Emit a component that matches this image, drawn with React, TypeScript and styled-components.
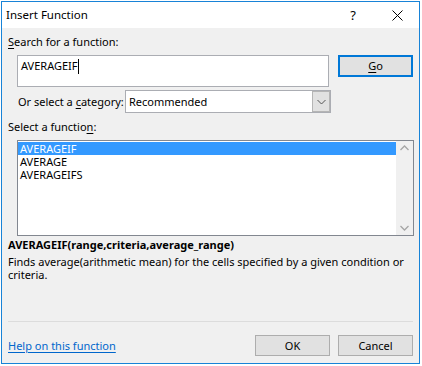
import React from "react";
import styled, { createGlobalStyle } from "styled-components";

const Global = createGlobalStyle`
  html, body { margin: 0; padding: 0; background: #ffffff; }
  body { font-family: "Noto Sans", "Segoe UI", sans-serif; font-size: 11px; color: #000; }
  * { box-sizing: border-box; }
`;

const Dialog = styled.div`
  margin: 1px 0 0 1px;
  width: 419px;
  height: 363px;
  border: 1px solid #1883d7;
  background: #f0f0f0;
  display: flex;
  flex-direction: column;
`;

const TitleBar = styled.div`
  height: 26px;
  background: #ffffff;
  display: flex;
  align-items: center;
  padding-left: 4px;
`;

const Title = styled.div`
  flex: 1;
  font-size: 11.5px;
  line-height: 16px;
`;

const TitleButton = styled.div`
  width: 44px;
  height: 26px;
  display: flex;
  align-items: center;
  justify-content: center;
  font-size: 13px;
`;

const Body = styled.div`
  flex: 1;
  display: flex;
  flex-direction: column;
  padding: 6px 6px 7px 6px;
  white-space: nowrap;
`;

const Label = styled.div<{ $mt?: number }>`
  line-height: 16px;
  margin-top: ${(p) => p.$mt ?? 0}px;
`;

const Key = styled.span`
  text-decoration: underline;
  text-underline-offset: 2px;
`;

const SearchRow = styled.div`
  display: flex;
  margin-top: 5px;
  margin-left: 9px;
  gap: 9px;
`;

const SearchBox = styled.div`
  width: 313px;
  height: 32px;
  background: #fff;
  border: 1px solid #abadb3;
  padding: 2px 0 0 3px;
  line-height: 16px;
  display: flex;
  align-items: flex-start;
`;

const Caret = styled.span`
  display: inline-block;
  width: 1px;
  height: 15px;
  background: #000;
  margin-top: 1px;
`;

const Button = styled.div<{ $primary?: boolean }>`
  width: 75px;
  height: ${(p) => (p.$primary ? 22 : 21)}px;
  background: #e1e1e1;
  border: ${(p) => (p.$primary ? "2px solid #0078d7" : "1px solid #adadad")};
  display: flex;
  align-items: center;
  justify-content: center;
  line-height: 16px;
`;

const CategoryRow = styled.div`
  display: flex;
  align-items: center;
  margin-top: 3px;
  margin-left: 10px;
  height: 23px;
`;

const Select = styled.div`
  margin-left: auto;
  margin-right: 82px;
  width: 206px;
  height: 23px;
  background: #fff;
  border: 1px solid #abadb3;
  display: flex;
  align-items: center;
  padding-left: 3px;
`;

const SelectText = styled.div`
  flex: 1;
`;

const SelectArrow = styled.div`
  width: 18px;
  height: 21px;
  background: #e1e1e1;
  border: 1px solid #b5b5b5;
  display: flex;
  align-items: center;
  justify-content: center;
`;

const ListBox = styled.div`
  margin: 5px 0 0 9px;
  width: 397px;
  height: 96px;
  background: #fff;
  border: 1px solid #828790;
  display: flex;
`;

const ListItems = styled.div`
  flex: 1;
  padding-top: 1px;
`;

const ListItem = styled.div<{ $selected?: boolean }>`
  height: 13px;
  line-height: 13px;
  padding-left: 2px;
  background: ${(p) => (p.$selected ? "#3399ff" : "transparent")};
  color: ${(p) => (p.$selected ? "#fff" : "#000")};
`;

const ScrollBar = styled.div`
  width: 17px;
  background: #f0f0f0;
  display: flex;
  flex-direction: column;
  justify-content: space-between;
  align-items: center;
  padding: 4px 0;
`;

const Signature = styled.div`
  margin-top: 1px;
  font-weight: bold;
  line-height: 16px;
`;

const Description = styled.div`
  margin-top: 2px;
  line-height: 13px;
`;

const Spacer = styled.div`
  flex: 1;
`;

const Separator = styled.div`
  height: 1px;
  background: #dcdcdc;
`;

const Footer = styled.div`
  display: flex;
  align-items: center;
  margin-top: 13px;
  gap: 8px;
`;

const HelpLink = styled.a`
  color: #0066cc;
  text-decoration: underline;
  text-underline-offset: 2px;
  margin-right: auto;
`;

const Chevron = ({ up }: { up?: boolean }) => (
  <svg width="9" height="6" viewBox="0 0 9 6">
    <path
      d={up ? "M0.5 5 L4.5 1 L8.5 5" : "M0.5 1 L4.5 5 L8.5 1"}
      fill="none"
      stroke="#a6a6a6"
      strokeWidth="1.3"
    />
  </svg>
);

export default function App() {
  return (
    <>
      <Global />
      <Dialog>
        <TitleBar>
          <Title>Insert Function</Title>
          <TitleButton>?</TitleButton>
          <TitleButton>
            <svg width="11" height="11" viewBox="0 0 11 11">
              <path d="M0.5 0.5 L10.5 10.5 M10.5 0.5 L0.5 10.5" stroke="#000" strokeWidth="1" />
            </svg>
          </TitleButton>
        </TitleBar>
        <Body>
          <Label>
            <Key>S</Key>earch for a function:
          </Label>
          <SearchRow>
            <SearchBox>
              AVERAGEIF
              <Caret />
            </SearchBox>
            <Button $primary>
              <Key>G</Key>o
            </Button>
          </SearchRow>
          <CategoryRow>
            <span>
              Or select a <Key>c</Key>ategory:
            </span>
            <Select>
              <SelectText>Recommended</SelectText>
              <SelectArrow>
                <svg width="9" height="6" viewBox="0 0 9 6">
                  <path d="M0.5 1 L4.5 5 L8.5 1" fill="none" stroke="#555" strokeWidth="1" />
                </svg>
              </SelectArrow>
            </Select>
          </CategoryRow>
          <Label $mt={6}>
            Select a functio<Key>n</Key>:
          </Label>
          <ListBox>
            <ListItems>
              <ListItem $selected>AVERAGEIF</ListItem>
              <ListItem>AVERAGE</ListItem>
              <ListItem>AVERAGEIFS</ListItem>
            </ListItems>
            <ScrollBar>
              <Chevron up />
              <Chevron />
            </ScrollBar>
          </ListBox>
          <Signature>AVERAGEIF(range,criteria,average_range)</Signature>
          <Description>
            Finds average(arithmetic mean) for the cells specified by a given condition or
            <br />
            criteria.
          </Description>
          <Spacer />
          <Separator />
          <Footer>
            <HelpLink>Help on this function</HelpLink>
            <Button>OK</Button>
            <Button>Cancel</Button>
          </Footer>
        </Body>
      </Dialog>
    </>
  );
}
